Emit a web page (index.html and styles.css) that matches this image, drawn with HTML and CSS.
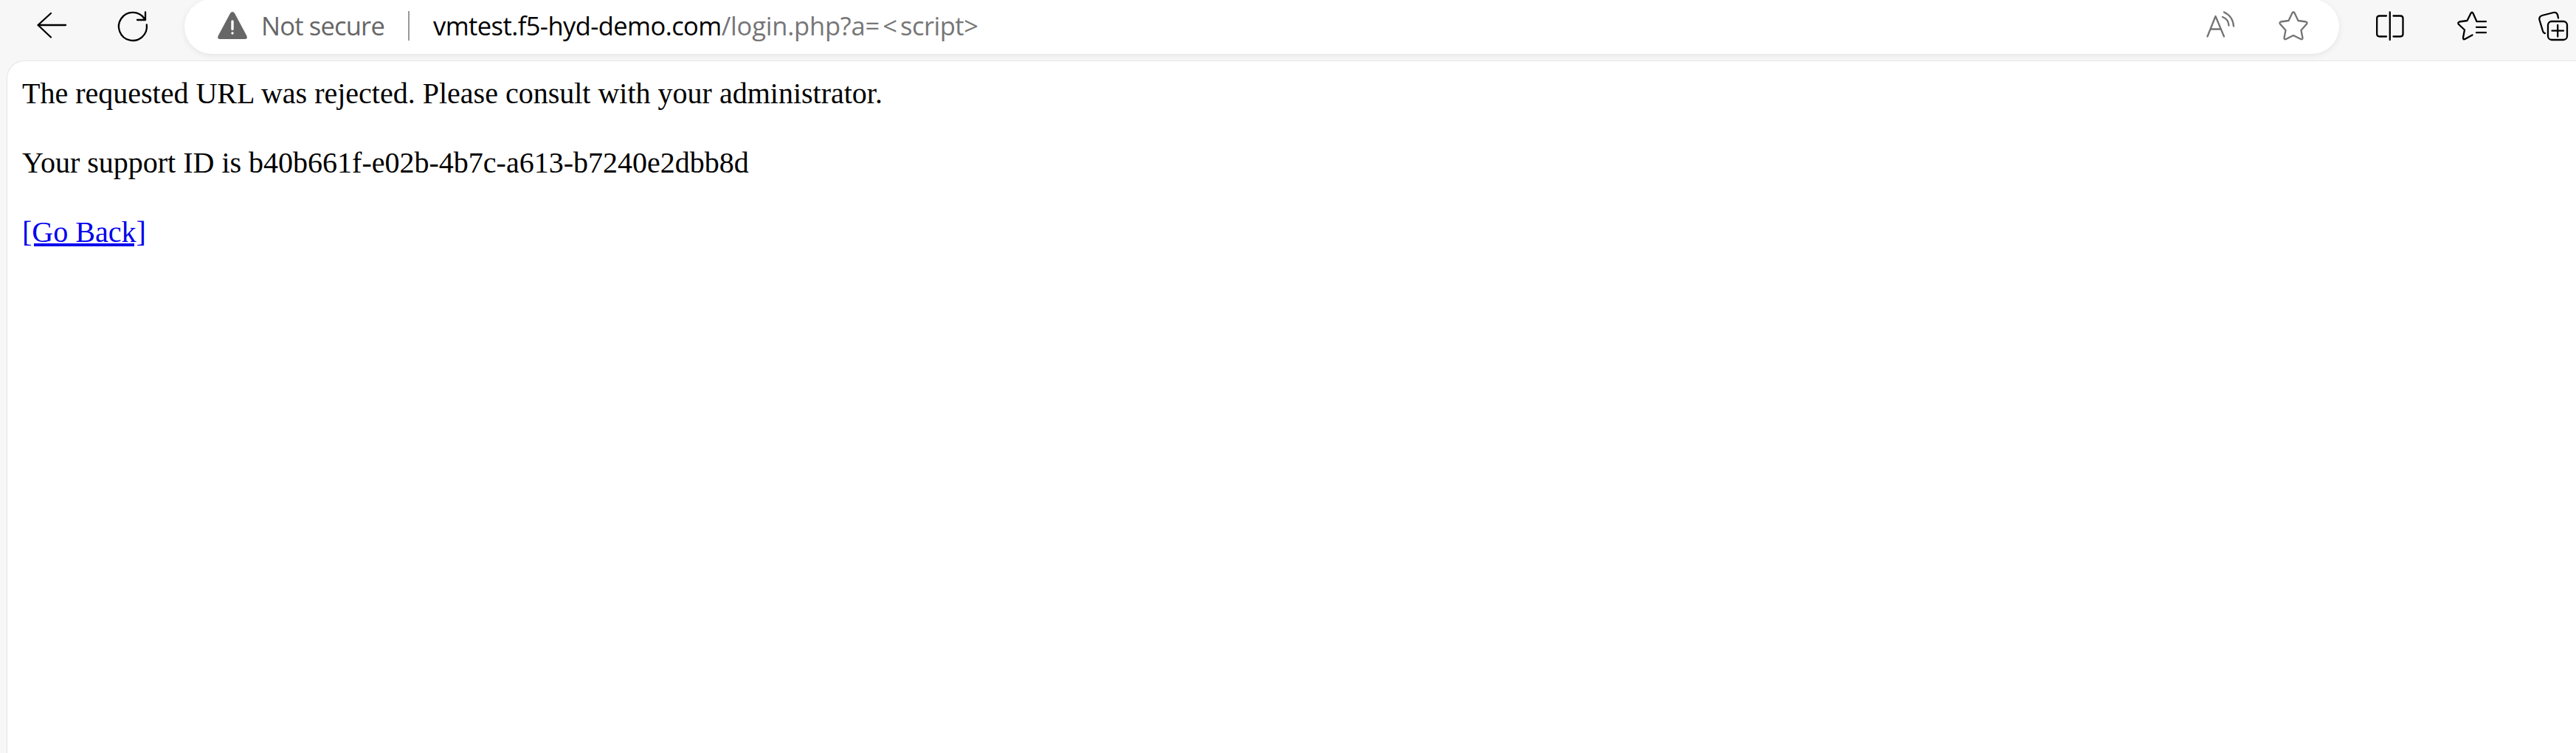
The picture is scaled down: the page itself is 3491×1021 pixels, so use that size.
FILE: index.html
```html
<!DOCTYPE html>
<html lang="en">
<head>
<meta charset="utf-8">
<title>Request Rejected</title>
<link rel="stylesheet" href="styles.css">
</head>
<body>
<header class="toolbar">
  <svg class="icon back" viewBox="0 0 40 40"><path d="M39 19H1.500M19 3L1.500 19L19 35.500"/></svg>
  <svg class="icon reload" viewBox="0 0 40 40"><path d="M38.800 18.500A19 19 0 1 1 35.500 10M37 1.500V12H26"/></svg>
  <div class="address">
    <svg class="warning" viewBox="0 0 40 40"><path class="sign" d="M17 3Q20 -1 23 3L39.300 33.500Q41 38 37 38H3Q-1 38 .7 33.500Z"/><path class="mark" d="M20 14V24.500M20 29.900V30"/></svg>
    <span class="status">Not secure</span>
    <span class="divider"></span>
    <span class="url"><span class="host">vmtest.f5-hyd-demo.com</span><span class="path">/login.php?a<span class="operator">=&lt;</span><span class="value">script</span>&gt;</span></span>
    <svg class="icon muted read" viewBox="0 0 40 40"><path d="M1.500 34.500L12.500 7L24 34.500M6 24.500H19.500M22 8Q30 11 30.500 19.500M24 1.500Q36 7 37 20.500"/></svg>
    <svg class="icon muted" viewBox="0 0 40 40"><path d="M18.500 2.500Q20 .5 21.500 2.500L26.500 13L37 14.500Q39.500 15.500 38 17.500L30.500 26L32.500 36.500Q32.500 39 30 38L20 33L10 38Q7.500 39 7.500 36.500L9.500 26L2 17.500Q.5 15.500 3 14.500L13.500 13Z"/></svg>
  </div>
  <svg class="icon split" viewBox="0 0 40 40"><path d="M18.800 1.500V39M14 6.500H5Q1.200 6.500 1.200 10V31Q1.200 34.500 5 34.500H14M23.500 6.500H33Q36.500 6.500 36.500 10V31Q36.500 34.500 33 34.500H23.500"/></svg>
  <svg class="icon favorites" viewBox="0 0 40 40"><path d="M39 14.200H26.500L21.500 3Q20 .5 18.500 3L13.500 13L3 14.500Q.2 15.500 2 18L10 25.500L8 36Q8 39 10.500 38L20.500 32.500M26 21.800H39M26 29.200H39"/></svg>
  <svg class="icon collections" viewBox="0 0 40 40"><rect x="13" y="14" width="26" height="25" rx="5"/><path d="M18.500 26.700H34M26.200 19V34.500M27 9.500L26 5Q24.500 1 20.500 2L5 6Q.5 7.500 1.500 12L6 27Q7 30 9 30.200"/></svg>
</header>
<main class="page">
  <p>The requested URL was rejected. Please consult with your administrator.</p>
  <p>Your support ID is b40b661f-e02b-4b7c-a613-b7240e2dbb8d</p>
  <p><a href="#">[Go Back]</a></p>
</main>
</body>
</html>
```
FILE: styles.css
```css
body {
  margin: 0;
  height: 1021px;
  overflow: hidden;
  background: #f7f7f7;
  display: flex;
  flex-direction: column;
}
.toolbar {
  height: 82px;
  flex: none;
  display: flex;
  align-items: flex-start;
  padding-left: 50px;
}
.icon {
  width: 40px;
  height: 40px;
  margin-top: 15px;
  flex: none;
  fill: none;
  stroke: #000;
  stroke-width: 2.3;
  stroke-linecap: round;
  stroke-linejoin: round;
  overflow: visible;
}
.reload { margin-left: 70px; }
.address {
  width: 2920px;
  height: 74px;
  margin: -1px 50px 0;
  padding: 0 42px 2px 45px;
  box-sizing: border-box;
  flex: none;
  display: flex;
  align-items: center;
  border-radius: 37px;
  background: #fff;
  box-shadow: 0 2px 8px rgba(0, 0, 0, 0.08);
  font-family: "Open Sans", sans-serif;
  font-size: 34.500px;
  line-height: 48px;
  white-space: nowrap;
}
.address .icon { margin-top: 0; }
.warning { width: 40px; height: 40px; flex: none; }
.sign { fill: #666; }
.mark { fill: none; stroke: #fff; stroke-width: 3.400; stroke-linecap: round; }
.status { width: 218px; padding-left: 19px; color: #666; box-sizing: border-box; letter-spacing: -0.8px; }
.divider { width: 2px; height: 40px; margin-right: 32px; background: #999; }
.url { flex: 1; }
.host { color: #000; letter-spacing: -0.57px; }
.path { color: #767676; letter-spacing: -0.2px; }
.operator { letter-spacing: 4px; }
.value { letter-spacing: -0.5px; }
.muted { stroke: #737373; }
.read { margin-right: 58px; }
.favorites { margin-left: 70px; }
.collections { margin-left: 70px; }
.page {
  flex: 1;
  margin-left: 9px;
  padding: 20px 0 0 20px;
  border: solid #e5e5e5;
  border-width: 1px 0 0 1px;
  border-top-left-radius: 24px;
  background: #fff;
  font: 40px/47px "Liberation Serif", serif;
  color: #000;
}
.page p { margin: 0 0 47px; }
.page a { color: #0000ee; text-decoration-thickness: 4px; text-underline-offset: 2px; }
```
